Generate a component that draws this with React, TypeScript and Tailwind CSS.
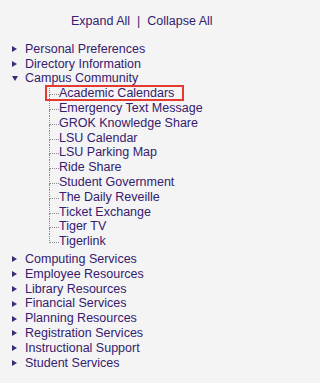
import React from "react";

const top1 = ["Personal Preferences", "Directory Information"];
const subs = [
  "Academic Calendars",
  "Emergency Text Message",
  "GROK Knowledge Share",
  "LSU Calendar",
  "LSU Parking Map",
  "Ride Share",
  "Student Government",
  "The Daily Reveille",
  "Ticket Exchange",
  "Tiger TV",
  "Tigerlink",
];
const top2 = [
  "Computing Services",
  "Employee Resources",
  "Library Resources",
  "Financial Services",
  "Planning Resources",
  "Registration Services",
  "Instructional Support",
  "Student Services",
];

function RightTri() {
  return (
    <span className="flex w-[6px] shrink-0 items-center">
      <svg width="5" height="6" viewBox="0 0 5 6">
        <polygon points="0,0 5,3 0,6" fill="#3d2a78" />
      </svg>
    </span>
  );
}

function DownTri() {
  return (
    <span className="flex w-[6px] shrink-0 items-center">
      <svg width="6" height="5" viewBox="0 0 6 5">
        <polygon points="0,0 6,0 3,5" fill="#3d2a78" />
      </svg>
    </span>
  );
}

function TopRow({ label, open }: { label: string; open?: boolean }) {
  return (
    <div className="flex items-center pl-[12px]">
      {open ? <DownTri /> : <RightTri />}
      <span className="ml-[7px] whitespace-nowrap">{label}</span>
    </div>
  );
}

function SubRow({ label, last, boxed }: { label: string; last?: boolean; boxed?: boolean }) {
  return (
    <div className="relative flex">
      <div className="flex w-[10px] shrink-0 flex-col">
        <div className="h-[9px] border-b border-l border-dotted border-[#8a8a8a]" />
        <div className={last ? "flex-1" : "flex-1 border-l border-dotted border-[#8a8a8a]"} />
      </div>
      <span className="whitespace-nowrap">{label}</span>
      {boxed && (
        <span className="pointer-events-none absolute left-[-4px] top-[-1px] h-[15.5px] w-[139px] border-2 border-[#e53a2f]" />
      )}
    </div>
  );
}

export default function App() {
  return (
    <div className="min-h-screen bg-[#f4f4f4] font-['Liberation_Sans',Arial,sans-serif] text-[12.5px] leading-[14.8px] text-[#35206f]">
      <div className="whitespace-pre pl-[71px] pt-[14px]">
        {"Expand All  |  Collapse All"}
      </div>
      <div className="mt-[13px] flex flex-col">
        {top1.map((t) => (
          <TopRow key={t} label={t} />
        ))}
        <TopRow label="Campus Community" open />
        <div className="mb-[3px] ml-[49px] flex flex-col">
          {subs.map((s, i) => (
            <SubRow key={s} label={s} last={i === subs.length - 1} boxed={i === 0} />
          ))}
        </div>
        {top2.map((t) => (
          <TopRow key={t} label={t} />
        ))}
      </div>
    </div>
  );
}
